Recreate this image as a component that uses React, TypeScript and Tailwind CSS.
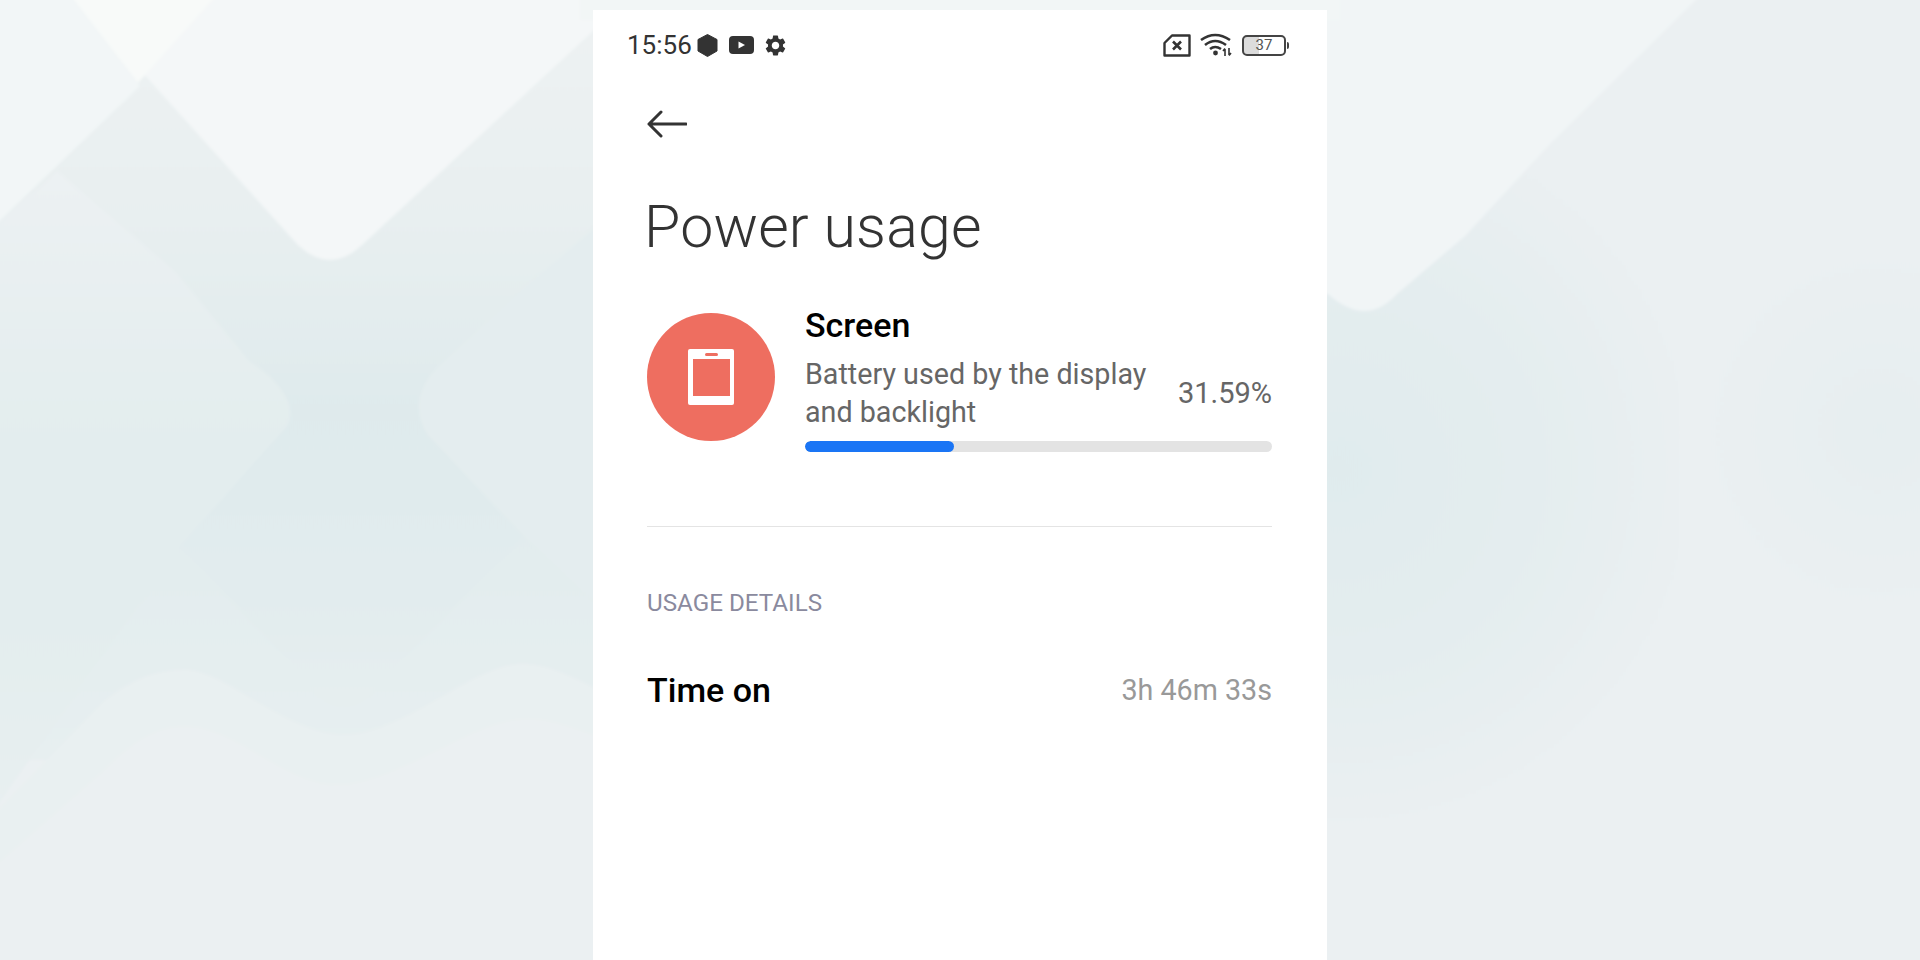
import { MdSettings } from "react-icons/md";

function Backdrop() {
  return (
    <svg className="absolute left-0 top-0 h-[960px] w-[1920px]" viewBox="0 0 1920 960">
      <defs>
        <filter id="soft" x="-5%" y="-5%" width="110%" height="110%">
          <feGaussianBlur stdDeviation="1.6" />
        </filter>
        <radialGradient id="rightGlow" gradientUnits="userSpaceOnUse" cx="1340" cy="470" r="370">
          <stop offset="0" stopColor="#e0ebed" />
          <stop offset="0.55" stopColor="#e4edef" />
          <stop offset="1" stopColor="#ebf0f2" />
        </radialGradient>
        <radialGradient id="farGlow" gradientUnits="userSpaceOnUse" cx="1880" cy="430" r="200">
          <stop offset="0" stopColor="#e6eef0" />
          <stop offset="1" stopColor="#ebf0f2" />
        </radialGradient>
        <linearGradient id="leftBase" x1="0" y1="0" x2="0" y2="1">
          <stop offset="0" stopColor="#eef2f3" />
          <stop offset="0.3" stopColor="#e8eff0" />
          <stop offset="0.55" stopColor="#dfeaec" />
          <stop offset="0.8" stopColor="#e2ecee" />
          <stop offset="1" stopColor="#e8eff0" />
        </linearGradient>
        <linearGradient id="leftDiamond" x1="0" y1="0" x2="0" y2="1">
          <stop offset="0" stopColor="#ecf1f3" />
          <stop offset="0.4" stopColor="#e3edee" />
          <stop offset="0.7" stopColor="#e3edee" />
          <stop offset="1" stopColor="#e8eff0" />
        </linearGradient>
        <linearGradient id="lowDiamond" x1="0" y1="0" x2="0" y2="1">
          <stop offset="0" stopColor="#e2ecee" />
          <stop offset="1" stopColor="#e8f0f1" />
        </linearGradient>
      </defs>
      <g filter="url(#soft)">
        <rect x="-20" y="-20" width="1960" height="1000" fill="#ebf0f2" />
        <rect x="-20" y="-20" width="640" height="780" fill="url(#leftBase)" />
        <rect x="1300" y="60" width="400" height="800" fill="url(#rightGlow)" />
        <rect x="1680" y="230" width="260" height="400" fill="url(#farGlow)" />
        <path d="M-20 -20H60L140 86-20 240Z" fill="#f2f6f7" />
        <path d="M59 -20H620V6L362 245Q330 275 298 245Z" fill="#f4f7f8" />
        <path d="M59 -20H230L138 83Z" fill="#f8faf9" />
        <path d="M-20 240L57 171 176 272 249 361Q300 395 288 425L180 545-20 830Z" fill="url(#leftDiamond)" />
        <path d="M620 205L524 288 440 365Q405 400 428 435L524 536 620 625Z" fill="#e4edef" />
        <path d="M180 545L320 695Q344 715 368 695L524 536 620 625V760H-20V830Z" fill="url(#lowDiamond)" />
        <path d="M-20 828L105 700C135 678 160 668 190 670 230 675 290 735 344 735 400 735 470 668 517 664 550 662 575 680 620 700V980H-20Z" fill="#e9f0f1" />
        <path d="M-20 880L105 770C135 740 160 725 190 727 240 730 290 790 344 785 400 780 470 725 517 720 550 716 575 730 620 745V980H-20Z" fill="#ebf0f2" />
        <path d="M1300 -20H1716L1550 144 1465 236 1397 294Q1366 328 1328 294H1300Z" fill="#f1f5f6" />
        <rect x="580" y="-20" width="760" height="40" fill="#f2f6f6" />
      </g>
    </svg>
  );
}

function StatusBar() {
  return (
    <div className="flex h-[70px] items-center justify-between pl-[34px] pr-[38px] text-[#333]">
      <div className="flex items-center">
        <span className="text-[26px] leading-none">15:56</span>
        <svg className="ml-[5px] h-[23px] w-[21px]" viewBox="0 0 21 23">
          <path d="M10.5 0.5L20 5.5V17L10.5 22.5 1 17V5.5Z" fill="#333" stroke="#333" strokeLinejoin="round" />
        </svg>
        <svg className="ml-[11px] h-[18px] w-[25px]" viewBox="0 0 25 18">
          <rect width="25" height="18" rx="4" fill="#333" />
          <path d="M9.5 5.5L16 9 9.5 12.5Z" fill="#fff" />
        </svg>
        <MdSettings className="ml-[9px] text-[25px]" />
      </div>
      <div className="flex items-center">
        <svg className="h-[23px] w-[28px]" viewBox="0 0 28 23" fill="none" stroke="#333" strokeWidth="2.4">
          <path d="M9 1.5H26.5V21.5H1.5V9Z" strokeLinejoin="round" />
          <path d="M10 7.5L18 15.5M18 7.5L10 15.5" strokeWidth="2.6" />
        </svg>
        <svg className="ml-[9px] h-[24px] w-[33px]" viewBox="0 0 33 24" fill="none" stroke="#333" strokeWidth="2.6">
          <path d="M1 7Q15 -3 30 7" />
          <path d="M5 12Q15 4 26 12" />
          <path d="M10 16Q15 12 21 16" />
          <circle cx="15.5" cy="20" r="2.4" fill="#333" stroke="none" />
          <path d="M25 23V16M23 18L25 15.5M29 15V22M31 20L29 22.5" strokeWidth="1.6" />
        </svg>
        <div className="ml-[9px] flex h-[21px] w-[44px] items-center justify-center rounded-[5px] border-2 border-[#444] bg-[linear-gradient(90deg,#dcdcdc_0_37%,#fff_37%)]">
          <span className="text-[15px] leading-none text-[#555]">37</span>
        </div>
        <div className="ml-[1px] h-[7px] w-[2px] rounded-r-sm bg-[#444]" />
      </div>
    </div>
  );
}

function ScreenIcon() {
  return (
    <div className="flex h-[128px] w-[128px] shrink-0 items-center justify-center rounded-full bg-[#ee6e60]">
      <div className="flex h-[56px] w-[46px] flex-col items-center rounded-[2px] bg-white">
        <div className="mt-[4px] h-[3px] w-[13px] rounded-full bg-[#ee6e60]" />
        <div className="mt-[3px] h-[37px] w-[37px] bg-[#ee6e60]" />
      </div>
    </div>
  );
}

export default function App() {
  return (
    <div className="relative h-[960px] w-[1920px] overflow-hidden font-['Roboto',sans-serif]">
      <Backdrop />
      <div className="relative mx-auto mt-[10px] h-[950px] w-[734px] bg-white">
        <StatusBar />
        <div className="pl-[54px] pr-[55px]">
          <svg className="mt-[30px] h-[28px] w-[40px]" viewBox="0 0 40 28" fill="none" stroke="#333" strokeWidth="3" strokeLinecap="round" strokeLinejoin="round">
            <path d="M39 14H2M14 2L2 14 14 26" />
          </svg>
          <h1 className="-ml-[3px] mt-[56px] text-[59px] font-light leading-[66px] tracking-[0.2px] text-[#333]">Power usage</h1>
          <div className="mt-[53px] flex">
            <ScreenIcon />
            <div className="ml-[30px] flex-1">
              <div className="-mt-[9px] text-[34px] font-medium leading-[42px] text-black">Screen</div>
              <div className="mt-[9px] flex items-end justify-between">
                <div className="w-[350px] text-[28.7px] leading-[38px] text-[#666]">Battery used by the display and backlight</div>
                <div className="mb-[19px] text-[29px] leading-[38px] text-[#666]">31.59%</div>
              </div>
              <div className="mt-[10px] h-[11px] w-full overflow-hidden rounded-full bg-[#e3e3e3]">
                <div className="h-full w-[32%] rounded-full bg-[#1a75f5]" />
              </div>
            </div>
          </div>
          <div className="mt-[74px] h-[1px] bg-[#e4e4e4]" />
          <div className="mt-[61px] text-[24.2px] leading-[30px] text-[#8a8a9e]">USAGE DETAILS</div>
          <div className="mt-[52px] flex items-center justify-between">
            <span className="text-[34px] font-medium leading-[40px] text-black">Time on</span>
            <span className="text-[28.7px] leading-[40px] text-[#999]">3h 46m 33s</span>
          </div>
        </div>
      </div>
    </div>
  );
}
